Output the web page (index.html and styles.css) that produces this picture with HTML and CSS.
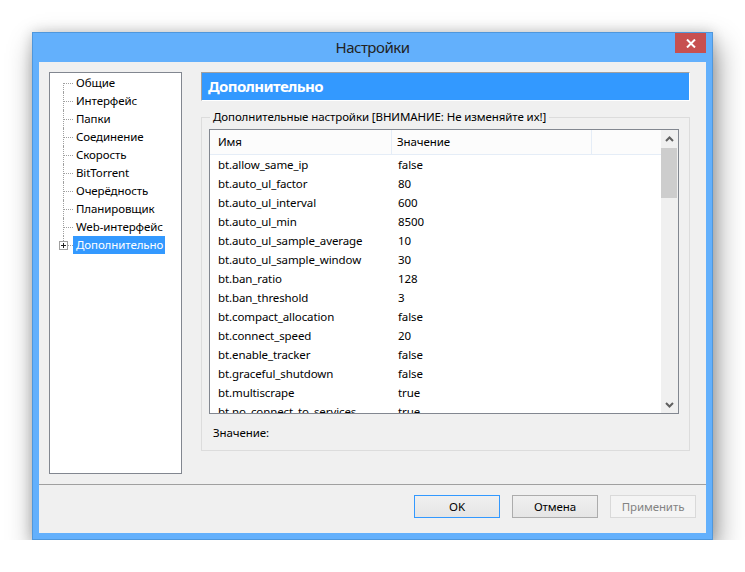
FILE: index.html
```html
<!DOCTYPE html>
<html lang="ru">
<head>
<meta charset="utf-8">
<title>Настройки</title>
<link rel="stylesheet" href="styles.css">
</head>
<body>
<div class="window">
  <div class="titlebar">
    <span></span>
    <span class="title">Настройки</span>
    <span class="close"><svg width="10" height="9" viewBox="0 0 10 9"><path d="M1 0.5 L9 8.5 M9 0.5 L1 8.5" stroke="#fff" stroke-width="2"/></svg></span>
  </div>
  <div class="client">
    <div class="main">
      <ul class="tree">
        <li class="node first"><span class="twig"></span><span class="label">Общие</span></li>
        <li class="node"><span class="twig"></span><span class="label">Интерфейс</span></li>
        <li class="node"><span class="twig"></span><span class="label">Папки</span></li>
        <li class="node"><span class="twig"></span><span class="label">Соединение</span></li>
        <li class="node"><span class="twig"></span><span class="label">Скорость</span></li>
        <li class="node"><span class="twig"></span><span class="label">BitTorrent</span></li>
        <li class="node"><span class="twig"></span><span class="label">Очерёдность</span></li>
        <li class="node"><span class="twig"></span><span class="label">Планировщик</span></li>
        <li class="node"><span class="twig"></span><span class="label">Web-интерфейс</span></li>
        <li class="node last"><span class="twig"><span class="expander"></span></span><span class="label selected">Дополнительно</span></li>
      </ul>
      <div class="panel">
        <div class="panel-head">Дополнительно</div>
        <div class="group">
          <div class="group-title">Дополнительные настройки [ВНИМАНИЕ: Не изменяйте их!]</div>
          <div class="list">
            <div class="list-body">
              <div class="list-head">
                <div class="col-name">Имя</div>
                <div class="col-value">Значение</div>
                <div class="col-rest"></div>
              </div>
              <div class="rows">
                <div class="row"><span class="c-name">bt.allow_same_ip</span><span class="c-value">false</span></div>
                <div class="row"><span class="c-name">bt.auto_ul_factor</span><span class="c-value">80</span></div>
                <div class="row"><span class="c-name">bt.auto_ul_interval</span><span class="c-value">600</span></div>
                <div class="row"><span class="c-name">bt.auto_ul_min</span><span class="c-value">8500</span></div>
                <div class="row"><span class="c-name">bt.auto_ul_sample_average</span><span class="c-value">10</span></div>
                <div class="row"><span class="c-name">bt.auto_ul_sample_window</span><span class="c-value">30</span></div>
                <div class="row"><span class="c-name">bt.ban_ratio</span><span class="c-value">128</span></div>
                <div class="row"><span class="c-name">bt.ban_threshold</span><span class="c-value">3</span></div>
                <div class="row"><span class="c-name">bt.compact_allocation</span><span class="c-value">false</span></div>
                <div class="row"><span class="c-name">bt.connect_speed</span><span class="c-value">20</span></div>
                <div class="row"><span class="c-name">bt.enable_tracker</span><span class="c-value">false</span></div>
                <div class="row"><span class="c-name">bt.graceful_shutdown</span><span class="c-value">false</span></div>
                <div class="row"><span class="c-name">bt.multiscrape</span><span class="c-value">true</span></div>
                <div class="row"><span class="c-name">bt.no_connect_to_services</span><span class="c-value">true</span></div>
              </div>
            </div>
            <div class="scrollbar">
              <div class="sb-btn"><svg width="9" height="6" viewBox="0 0 9 6"><path d="M1 5 L4.5 1.5 L8 5" fill="none" stroke="#606060" stroke-width="2"/></svg></div>
              <div class="sb-thumb"></div>
              <div class="sb-track"></div>
              <div class="sb-btn"><svg width="9" height="6" viewBox="0 0 9 6"><path d="M1 1 L4.5 4.5 L8 1" fill="none" stroke="#606060" stroke-width="2"/></svg></div>
            </div>
          </div>
          <div class="value-label">Значение:</div>
        </div>
      </div>
    </div>
    <div class="buttons">
      <button class="btn default">OK</button>
      <button class="btn">Отмена</button>
      <button class="btn disabled">Применить</button>
    </div>
  </div>
</div>
</body>
</html>
```

FILE: styles.css
```css
* { box-sizing: border-box; }
html, body { margin: 0; padding: 0; background: #ffffff; }
body {
  font-family: "Noto Sans", "Open Sans", sans-serif;
  font-size: 11.5px;
  letter-spacing: -0.1px;
  color: #000;
}
.window {
  margin: 32px 0 0 32px;
  width: 681px;
  height: 508px;
  background: #63b0fc;
  border: 1px solid #4f97dc;
  padding: 0 6px 6px 6px;
  box-shadow: 4px 12px 26px rgba(0,0,0,0.42), 0 0 12px rgba(0,0,0,0.16);
  display: flex;
  flex-direction: column;
}
.titlebar {
  height: 29px;
  display: grid;
  grid-template-columns: 1fr auto 1fr;
  align-items: start;
}
.title {
  font-size: 15px;
  letter-spacing: -0.5px;
  line-height: 29px;
  color: #222;
}
.close {
  justify-self: end;
  width: 31px;
  height: 20px;
  background: #c75050;
  display: flex;
  align-items: center;
  justify-content: center;
}
.client {
  flex: 1;
  background: #f0f0f0;
  display: flex;
  flex-direction: column;
}
.main {
  height: 422px;
  display: flex;
  padding: 10px 0 0 10px;
}
.tree {
  list-style: none;
  margin: 0;
  width: 133px;
  height: 402px;
  background: #fff;
  border: 1px solid #828790;
  padding: 1px 0 0 13px;
}
.node {
  height: 18px;
  display: flex;
  align-items: center;
}
.twig {
  position: relative;
  width: 10px;
  height: 18px;
  flex: none;
}
.twig::before {
  content: "";
  position: absolute;
  left: 0;
  top: 0;
  height: 18px;
  border-left: 1px dotted #a0a0a0;
}
.first .twig::before { top: 9px; height: 9px; }
.last .twig::before { height: 9px; }
.twig::after {
  content: "";
  position: absolute;
  left: 1px;
  top: 9px;
  width: 9px;
  border-top: 1px dotted #a0a0a0;
}
.expander {
  position: absolute;
  left: -4px;
  top: 5px;
  width: 9px;
  height: 9px;
  border: 1px solid #a0a0a0;
  background: #fff;
  z-index: 1;
}
.expander::before {
  content: "";
  position: absolute;
  left: 1px; top: 3px;
  width: 5px; height: 1px;
  background: #222;
}
.expander::after {
  content: "";
  position: absolute;
  left: 3px; top: 1px;
  width: 1px; height: 5px;
  background: #222;
}
.label {
  padding: 0 2px 0 3px;
  line-height: 18px;
  white-space: nowrap;
}
.label.selected {
  background: #3399ff;
  color: #fff;
}
.panel {
  margin-left: 19px;
  width: 489px;
  display: flex;
  flex-direction: column;
}
.panel-head {
  height: 29px;
  background: #3399ff;
  border-top: 1px solid #a0a0a0;
  border-left: 1px solid #a0a0a0;
  border-right: 1px solid #fff;
  border-bottom: 1px solid #fff;
  color: #fff;
  font-weight: bold;
  font-size: 15px;
  letter-spacing: -0.6px;
  line-height: 27px;
  padding-left: 6px;
}
.group {
  margin-top: 16px;
  border: 1px solid #dcdcdc;
  padding: 0 10px 9px 7px;
}
.group-title {
  margin: -9px 0 0 1px;
  padding: 0 3px;
  line-height: 16px;
  background: #f0f0f0;
  width: fit-content;
}
.list {
  margin-top: 4px;
  height: 285px;
  border: 1px solid #828790;
  background: #fff;
  display: flex;
}
.list-body {
  flex: 1;
  overflow: hidden;
}
.list-head {
  height: 25px;
  display: flex;
  background: #fcfcfc;
  border-bottom: 1px solid #e5edf7;
}
.list-head > div {
  line-height: 24px;
  border-right: 1px solid #e5edf7;
}
.col-name { width: 182px; padding-left: 8px; }
.col-value { width: 200px; padding-left: 5px; }
.col-rest { flex: 1; border-right: none !important; }
.row {
  height: 19px;
  display: flex;
  line-height: 19px;
}
.c-name { width: 182px; padding-left: 8px; white-space: nowrap; }
.c-value { padding-left: 6px; }
.scrollbar {
  width: 17px;
  background: #f0f0f0;
  display: flex;
  flex-direction: column;
}
.sb-btn {
  height: 17px;
  display: flex;
  align-items: center;
  justify-content: center;
}
.sb-thumb {
  height: 50px;
  margin: 1px 1px 0 0;
  background: #cdcdcd;
}
.sb-track { flex: 1; }
.value-label {
  margin-top: 11px;
  line-height: 16px;
  padding-left: 4px;
}
.buttons {
  flex: 1;
  border-top: 1px solid #a0a0a0;
  display: flex;
  justify-content: flex-end;
  align-items: flex-start;
  gap: 12px;
  padding: 10px 10px 0 0;
}
.btn {
  width: 86px;
  height: 23px;
  font-family: inherit;
  font-size: 11.5px;
  letter-spacing: -0.1px;
  color: #000;
  background: linear-gradient(#f0f0f0, #e5e5e5);
  border: 1px solid #acacac;
  padding: 0;
}
.btn.default { border-color: #3399ff; }
.btn.disabled {
  color: #838383;
  background: #f4f4f4;
  border-color: #d9d9d9;
}
```
